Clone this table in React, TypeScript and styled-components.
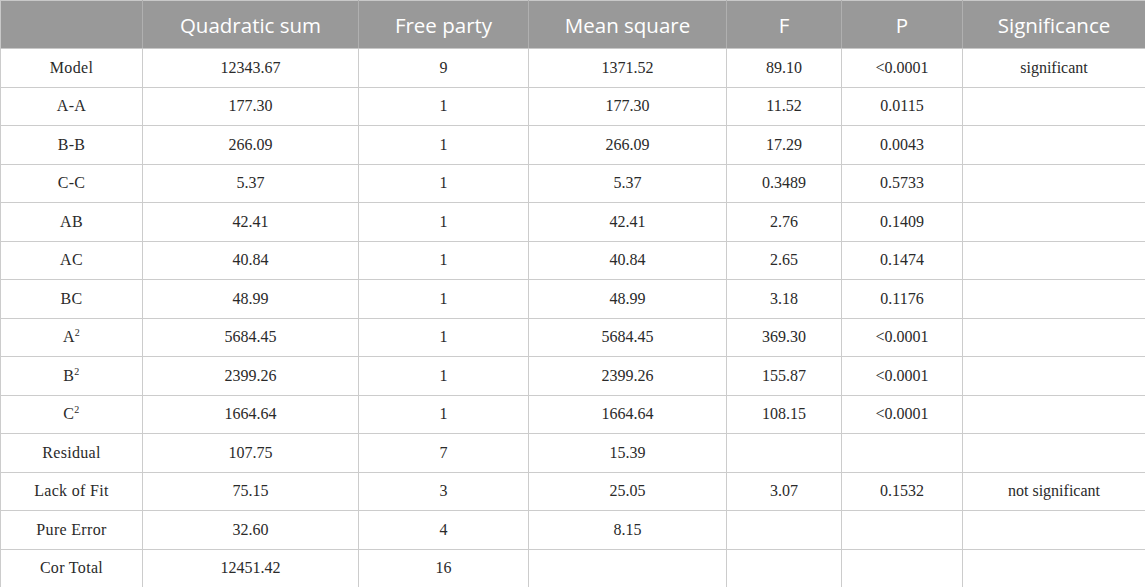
import React from "react";
import styled, { createGlobalStyle } from "styled-components";

const Global = createGlobalStyle`
  html, body { margin: 0; padding: 0; background: #ffffff; }
`;

const Table = styled.table`
  width: 1145px;
  table-layout: fixed;
  border-collapse: collapse;
  border: 1px solid #c8c8c8;
`;

const HeadCell = styled.th`
  height: 47px;
  padding: 0;
  background: #999999;
  color: #ffffff;
  font-family: "Open Sans", "Noto Sans", sans-serif;
  font-size: 20.5px;
  font-weight: 400;
  text-align: center;
  vertical-align: middle;
  border-left: 1px solid #b0b0b0;
  border-bottom: 1px solid #c8c8c8;
  &:first-child { border-left: none; }
`;

const Cell = styled.td<{ $spaced?: boolean }>`
  height: 37.5px;
  padding: 0;
  font-family: "Liberation Serif", "Times New Roman", serif;
  font-size: 16px;
  color: #2a2a2a;
  text-align: center;
  vertical-align: middle;
  border: 1px solid #cccccc;
  letter-spacing: ${(p) => (p.$spaced ? "0.02em" : "0")};
`;

const Sup = styled.sup`
  font-size: 10px;
  vertical-align: 6px;
  line-height: 0;
`;

const widths = [142, 216, 170, 198, 115, 121, 183];
const headers = ["", "Quadratic sum", "Free party", "Mean square", "F", "P", "Significance"];

type Row = [React.ReactNode, string, string, string, string, string, string];

const rows: Row[] = [
  ["Model", "12343.67", "9", "1371.52", "89.10", "<0.0001", "significant"],
  ["A-A", "177.30", "1", "177.30", "11.52", "0.0115", ""],
  ["B-B", "266.09", "1", "266.09", "17.29", "0.0043", ""],
  ["C-C", "5.37", "1", "5.37", "0.3489", "0.5733", ""],
  ["AB", "42.41", "1", "42.41", "2.76", "0.1409", ""],
  ["AC", "40.84", "1", "40.84", "2.65", "0.1474", ""],
  ["BC", "48.99", "1", "48.99", "3.18", "0.1176", ""],
  [<>A<Sup>2</Sup></>, "5684.45", "1", "5684.45", "369.30", "<0.0001", ""],
  [<>B<Sup>2</Sup></>, "2399.26", "1", "2399.26", "155.87", "<0.0001", ""],
  [<>C<Sup>2</Sup></>, "1664.64", "1", "1664.64", "108.15", "<0.0001", ""],
  ["Residual", "107.75", "7", "15.39", "", "", ""],
  ["Lack of Fit", "75.15", "3", "25.05", "3.07", "0.1532", "not significant"],
  ["Pure Error", "32.60", "4", "8.15", "", "", ""],
  ["Cor Total", "12451.42", "16", "", "", "", ""],
];

export default function App() {
  return (
    <>
      <Global />
      <Table>
        <colgroup>
          {widths.map((w, i) => (
            <col key={i} style={{ width: w }} />
          ))}
        </colgroup>
        <thead>
          <tr>
            {headers.map((h, i) => (
              <HeadCell key={i}>{h}</HeadCell>
            ))}
          </tr>
        </thead>
        <tbody>
          {rows.map((r, ri) => (
            <tr key={ri}>
              {r.map((c, ci) => (
                <Cell key={ci} $spaced={ci === 0}>{c}</Cell>
              ))}
            </tr>
          ))}
        </tbody>
      </Table>
    </>
  );
}
